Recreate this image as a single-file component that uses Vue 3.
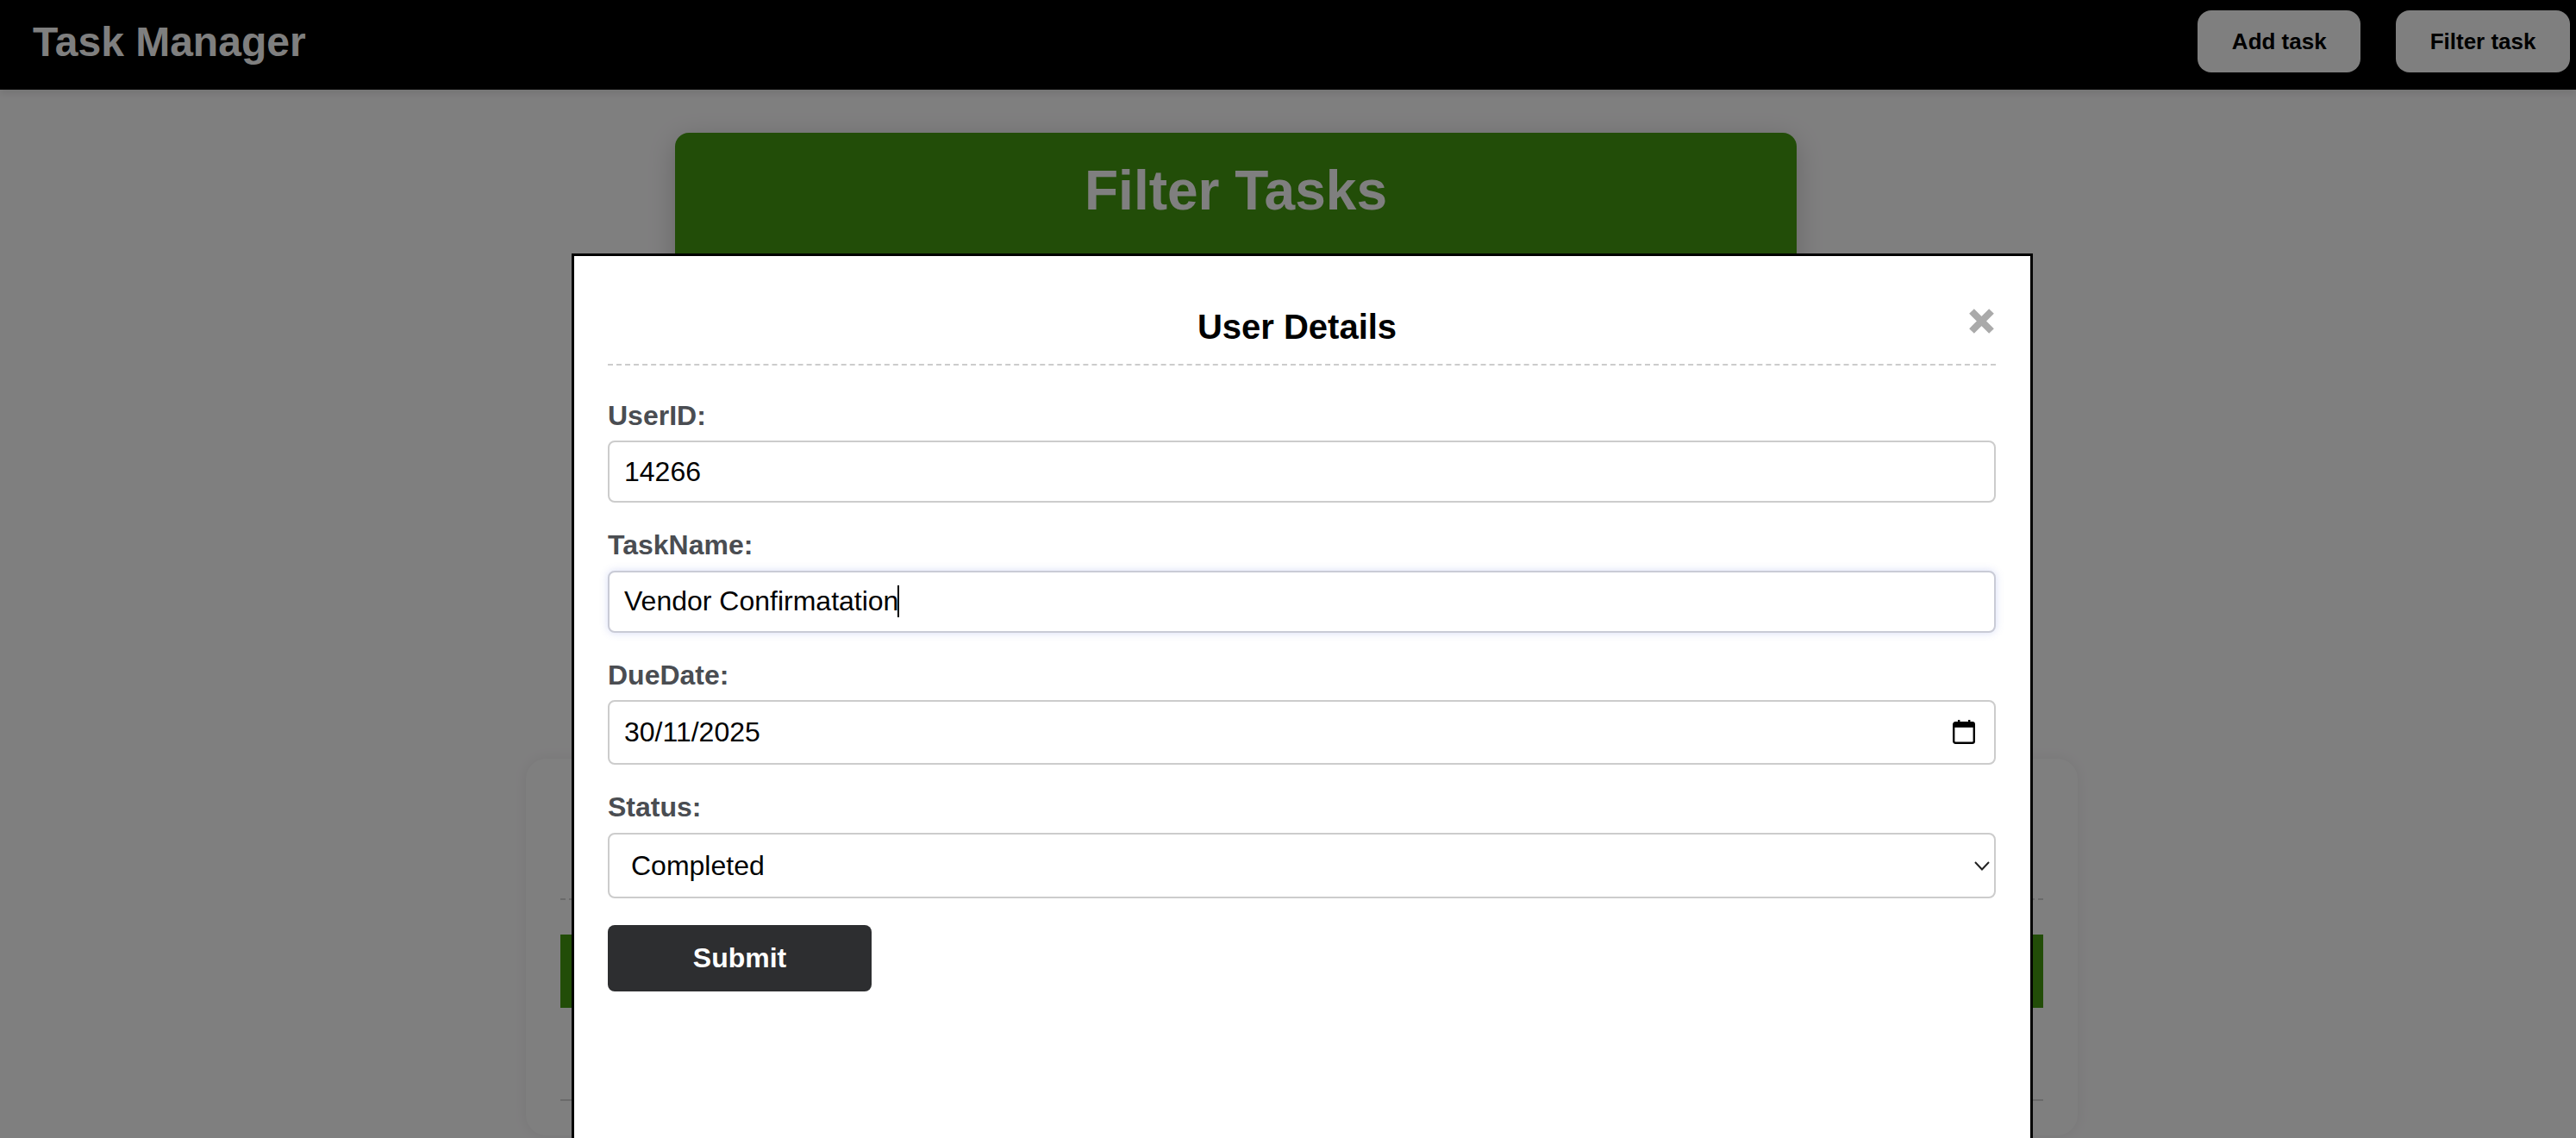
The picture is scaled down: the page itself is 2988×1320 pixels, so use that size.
<script setup>
import { ref } from 'vue'
const userId = ref('14266')
const taskName = ref('Vendor Confirmatation')
const dueDate = ref('30/11/2025')
const status = ref('Completed')
const statuses = ['Pending', 'In Progress', 'Completed']
</script>

<template>
  <div class="page">
    <header class="topbar">
      <div class="brand">Task Manager</div>
      <nav class="actions">
        <button class="nav-btn" type="button">Add task</button>
        <button class="nav-btn" type="button">Filter task</button>
      </nav>
    </header>

    <main class="content">
      <section class="filter-card">
        <h2 class="filter-title">Filter Tasks</h2>
      </section>
      <section class="list-card">
        <div class="list-head"></div>
        <div class="list-bar"></div>
        <div class="list-row"></div>
      </section>
    </main>

    <div class="overlay">
      <div class="modal">
        <div class="modal-head">
          <h3 class="modal-title">User Details</h3>
          <svg class="close" viewBox="0 0 29 29" width="29" height="29" aria-label="Close">
            <path d="M3 3 26 26M26 3 3 26" fill="none" stroke="#aaaaaa" stroke-width="8" />
          </svg>
        </div>
        <form class="form" @submit.prevent>
          <div class="field">
            <label class="label">UserID:</label>
            <input class="control" v-model="userId" type="text" />
          </div>
          <div class="field">
            <label class="label">TaskName:</label>
            <div class="control-wrap">
              <input class="control focused" v-model="taskName" type="text" />
              <span class="caret"></span>
            </div>
          </div>
          <div class="field">
            <label class="label">DueDate:</label>
            <div class="control-wrap">
              <input class="control tall" v-model="dueDate" type="text" />
              <svg class="calendar" viewBox="0 0 26 28" width="26" height="28">
                <rect x="6" y="0" width="2.4" height="5" fill="#000" />
                <rect x="18" y="0" width="2.4" height="5" fill="#000" />
                <rect x="1.2" y="3.2" width="23.6" height="23.6" rx="2" fill="none" stroke="#000" stroke-width="2.4" />
                <rect x="1.2" y="3.2" width="23.6" height="5.6" fill="#000" />
              </svg>
            </div>
          </div>
          <div class="field">
            <label class="label">Status:</label>
            <div class="control-wrap">
              <select class="control select" v-model="status">
                <option v-for="s in statuses" :key="s" :value="s">{{ s }}</option>
              </select>
              <svg class="chevron" viewBox="0 0 18 11" width="18" height="11">
                <path d="M1 1 9 9.5 17 1" fill="none" stroke="#222" stroke-width="2" />
              </svg>
            </div>
          </div>
          <button class="submit" type="submit">Submit</button>
        </form>
      </div>
    </div>
  </div>
</template>

<style>
html, body {
  margin: 0;
  height: 100%;
  overflow: hidden;
  background: #fff;
}
</style>

<style scoped>
.page {
  height: 1320px;
  overflow: hidden;
  font-family: "Liberation Sans", Arial, sans-serif;
  background: #fffeff;
}
.topbar {
  height: 104px;
  box-sizing: border-box;
  padding: 0 7px 8px 38px;
  display: flex;
  align-items: center;
  justify-content: space-between;
  background: #000;
  box-shadow: 0 4px 8px rgba(0, 0, 0, 0.1);
  position: relative;
}
.brand {
  color: #fff;
  font-size: 48px;
  font-weight: 700;
}
.actions {
  display: flex;
  gap: 41px;
}
.nav-btn {
  height: 72px;
  padding: 0 39.5px;
  border: 0;
  border-radius: 16px;
  background: #fff;
  color: #000;
  font-family: inherit;
  font-size: 26px;
  font-weight: 700;
}
.content {
  display: flex;
  flex-direction: column;
  gap: 50px;
  padding-top: 50px;
}
.filter-card {
  width: 1301px;
  height: 676px;
  margin-left: 783px;
  border-radius: 16px;
  background: #449a10;
  box-shadow: 0 8px 32px rgba(0, 0, 0, 0.2);
  box-sizing: border-box;
  padding-top: 30px;
}
.filter-title {
  margin: 0;
  text-align: center;
  color: #fff;
  font-size: 64px;
  font-weight: 700;
}
.list-card {
  width: 1800px;
  height: 437px;
  margin-left: 610px;
  box-sizing: border-box;
  padding: 0 40px;
  border-radius: 24px;
  background: #fff;
  box-shadow: 0 0 16px rgba(0, 0, 0, 0.07);
}
.list-head {
  height: 164px;
  box-sizing: border-box;
  border-bottom: 2px dashed #d4d4d4;
}
.list-bar {
  height: 85px;
  margin-top: 40px;
  background: #449a10;
}
.list-row {
  height: 108px;
  box-sizing: border-box;
  border-bottom: 2px solid #d4d4d4;
}
.overlay {
  position: fixed;
  inset: 0;
  background: rgba(0, 0, 0, 0.5);
}
.modal {
  position: absolute;
  left: 663px;
  top: 294px;
  width: 1695px;
  height: 1100px;
  box-sizing: border-box;
  padding: 40px 40px 40px 39px;
  border: 3px solid #000;
  background: #fff;
}
.modal-head {
  position: relative;
  padding: 20px 11px 20px 0;
  border-bottom: 2px dashed #cccccc;
}
.modal-title {
  margin: 0;
  text-align: center;
  color: #000;
  font-size: 40px;
  font-weight: 700;
}
.close {
  position: absolute;
  top: 21px;
  right: 2px;
}
.form {
  display: flex;
  flex-direction: column;
  gap: 31px;
  padding-top: 39.5px;
}
.field {
  display: flex;
  flex-direction: column;
  gap: 10.5px;
}
.label {
  color: #4a4d52;
  font-size: 32px;
  font-weight: 700;
}
.control-wrap {
  position: relative;
}
.control {
  display: block;
  width: 100%;
  height: 72px;
  box-sizing: border-box;
  padding: 0 17px;
  border: 2px solid #cccccc;
  border-radius: 8px;
  background: #fff;
  color: #000;
  font-family: inherit;
  font-size: 32px;
  outline: none;
}
.focused {
  border-color: #c9cbd6;
  box-shadow: 0 0 10px rgba(100, 120, 220, 0.25);
}
.tall {
  height: 75px;
}
.select {
  height: 76px;
  padding-left: 25px;
  appearance: none;
}
.caret {
  position: absolute;
  left: 336px;
  top: 17px;
  width: 2px;
  height: 37px;
  background: #000;
}
.calendar {
  position: absolute;
  right: 24px;
  top: 23px;
}
.chevron {
  position: absolute;
  right: 7px;
  top: 33px;
}
.submit {
  width: 306px;
  height: 77px;
  border: 0;
  border-radius: 8px;
  background: #2d2e30;
  color: #fff;
  font-family: inherit;
  font-size: 32px;
  font-weight: 700;
}
</style>
